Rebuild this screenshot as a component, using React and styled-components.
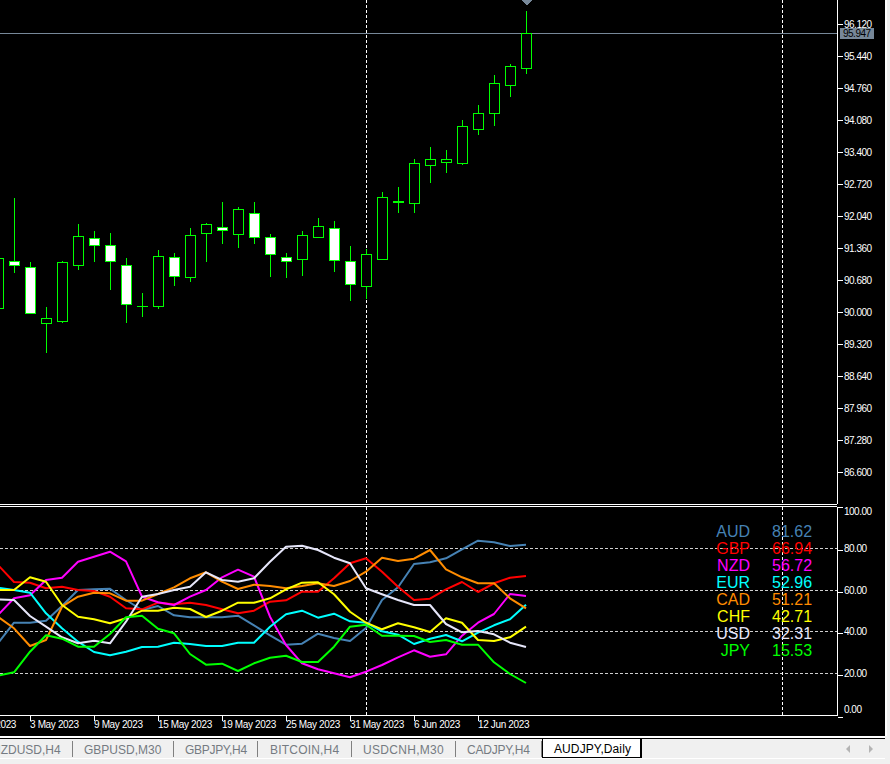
import React from "react";
import styled, { createGlobalStyle } from "styled-components";

const Global = createGlobalStyle`
  html, body { margin: 0; padding: 0; background: #f0f0f0; }
  #root { width: 890px; height: 764px; overflow: hidden; }
`;

const FONT = `"Liberation Sans", Arial, sans-serif`;
const SLATE = "#778899";

const Page = styled.div`
  width: 890px;
  height: 764px;
  overflow: hidden;
  display: flex;
  flex-direction: column;
  background: #f0f0f0;
  font-family: ${FONT};
`;
const Terminal = styled.div`
  width: 885px;
  height: 736px;
  flex: none;
  background: #000;
  border-right: 2px solid #fff;
  display: flex;
  flex-direction: column;
`;
const PriceRow = styled.section`
  display: flex;
  height: 504px;
  flex: none;
`;
const Plot = styled.div`
  position: relative;
  width: 837px;
  flex: none;
  overflow: hidden;
  svg { display: block; }
`;
const PriceAxis = styled.div`
  position: relative;
  flex: 1;
  border-left: 1px solid #fff;
  padding-top: 8px;
  display: flex;
  flex-direction: column;
`;
const PriceTick = styled.div`
  position: relative;
  height: 32px;
  flex: none;
  padding-left: 6px;
  line-height: 34px;
  color: #fff;
  font-size: 10px;
  letter-spacing: -0.5px;
  &::before {
    content: "";
    position: absolute;
    left: 0;
    top: 16px;
    width: 5px;
    height: 1px;
    background: #fff;
  }
`;
const BidTag = styled.div`
  position: absolute;
  left: 2px;
  top: 28px;
  width: 34px;
  height: 11px;
  line-height: 11px;
  background: ${SLATE};
  color: #000;
  font-size: 10px;
  letter-spacing: -0.5px;
  padding-left: 3px;
  box-sizing: border-box;
`;
const Separator = styled.div`
  width: 837px;
  height: 3px;
  flex: none;
  box-sizing: border-box;
  border-top: 1px solid #fff;
  border-bottom: 1px solid #fff;
`;
const IndicatorRow = styled.section`
  display: flex;
  height: 209px;
  flex: none;
`;
const IndicatorPlot = styled(Plot)`
  border-bottom: 1px solid #fff;
`;
const IndicatorAxis = styled.div`
  flex: 1;
  border-left: 1px solid #fff;
  position: relative;
  display: flex;
  flex-direction: column;
`;
const Level = styled.div`
  position: relative;
  height: 12px;
  line-height: 10px;
  flex: none;
  margin-top: ${(p) => p.$gap}px;
  padding-left: 6px;
  color: #fff;
  font-size: 10px;
  letter-spacing: -0.5px;
  &::before {
    content: "";
    position: absolute;
    left: 0;
    top: ${(p) => p.$tick}px;
    width: 5px;
    height: 1px;
    background: #fff;
  }
`;
const Legend = styled.div`
  position: absolute;
  right: 25px;
  top: 16px;
  display: grid;
  grid-template-columns: auto 40px;
  column-gap: 22px;
  font-size: 16px;
  line-height: 17px;
  text-align: right;
`;
const LegendCell = styled.span`
  color: ${(p) => p.$color};
`;
const TimeAxis = styled.div`
  height: 20px;
  flex: none;
  width: 837px;
  overflow: hidden;
  display: flex;
`;
const TimeTrack = styled.div`
  display: grid;
  grid-auto-flow: column;
  grid-auto-columns: 64px;
  margin-left: -34px;
  flex: none;
`;
const TimeLabel = styled.div`
  position: relative;
  color: #fff;
  font-size: 10px;
  line-height: 17px;
  white-space: nowrap;
  letter-spacing: -0.35px;
  &::before {
    content: "";
    position: absolute;
    left: 0;
    top: 0;
    width: 1px;
    height: 5px;
    background: #fff;
  }
`;
const TabBar = styled.nav`
  width: 885px;
  height: 24px;
  flex: none;
  box-sizing: border-box;
  border-top: 2px solid #fff;
  display: flex;
  flex-direction: column;
`;
const TabStrip = styled.div`
  height: 21px;
  flex: none;
  box-sizing: border-box;
  border-top: 1px solid #000;
  border-bottom: 1px solid #fff;
  display: flex;
  align-items: flex-start;
  overflow: hidden;
`;
const Tab = styled.div`
  position: relative;
  flex: none;
  box-sizing: border-box;
  width: ${(p) => p.$width}px;
  margin-left: ${(p) => p.$offset || 0}px;
  height: 19px;
  line-height: 23px;
  padding-left: ${(p) => p.$pad || 11}px;
  font-size: 12px;
  letter-spacing: ${(p) => p.$spacing || 0}px;
  color: #757b82;
  white-space: nowrap;
  overflow: hidden;
  &::after {
    content: "";
    position: absolute;
    right: 0;
    top: 2px;
    bottom: 1px;
    width: 1px;
    background: #808080;
  }
`;
const ActiveTab = styled.div`
  flex: none;
  box-sizing: border-box;
  width: 100px;
  height: 20px;
  line-height: 20px;
  font-size: 12px;
  letter-spacing: 0.1px;
  color: #000;
  background: #fff;
  padding-left: 11px;
  border-left: 1px solid #000;
  border-right: 2px solid #000;
  border-bottom: 2px solid #000;
`;
const ScrollArrows = styled.div`
  margin-left: auto;
  height: 19px;
  display: flex;
  align-items: center;
  gap: 19px;
  padding-right: 12px;
`;
const ArrowLeft = styled.span`
  width: 0;
  height: 0;
  border-style: solid;
  border-width: 4px 4px 4px 0;
  border-color: transparent #b4b4b4 transparent transparent;
`;
const ArrowRight = styled.span`
  width: 0;
  height: 0;
  border-style: solid;
  border-width: 4px 0 4px 4px;
  border-color: transparent transparent transparent #b4b4b4;
`;

/* x, wickTop, wickBottom, bodyTop, bodyBottom, filled */
const candles = [
  [-2, 250, 312, 258, 308, 0],
  [14, 198, 273, 261, 265, 1],
  [30, 262, 314, 267, 313, 1],
  [46, 307, 353, 318, 323, 0],
  [62, 261, 323, 262, 321, 0],
  [78, 224, 270, 236, 265, 0],
  [94, 231, 262, 238, 245, 1],
  [110, 233, 290, 245, 261, 1],
  [126, 258, 323, 265, 304, 1],
  [142, 293, 317, 306, 306, 0],
  [158, 250, 309, 256, 306, 0],
  [174, 253, 286, 257, 276, 1],
  [190, 228, 282, 235, 277, 0],
  [206, 223, 262, 224, 233, 0],
  [222, 202, 244, 227, 230, 1],
  [238, 207, 248, 209, 234, 0],
  [254, 202, 244, 213, 237, 1],
  [270, 234, 277, 237, 254, 1],
  [286, 253, 278, 257, 261, 1],
  [302, 231, 276, 235, 259, 0],
  [318, 218, 238, 226, 237, 0],
  [334, 221, 272, 228, 260, 1],
  [350, 246, 301, 261, 284, 1],
  [366, 249, 299, 254, 286, 0],
  [382, 192, 260, 197, 259, 0],
  [398, 187, 213, 201, 201, 2],
  [414, 159, 213, 163, 203, 0],
  [430, 147, 183, 159, 165, 0],
  [446, 150, 173, 159, 162, 0],
  [462, 120, 165, 126, 163, 0],
  [478, 105, 135, 113, 129, 0],
  [494, 75, 126, 83, 113, 0],
  [510, 64, 97, 66, 85, 0],
  [526, 11, 74, 33, 68, 0],
];

const prices = [
  "96.120", "95.440", "94.760", "94.080", "93.400", "92.720", "92.040", "91.360",
  "90.680", "90.000", "89.320", "88.640", "87.960", "87.280", "86.600",
];

const series = [
  { name: "AUD", value: "81.62", color: "#4682B4", v: [430, 368, 368, 362, 318, 270, 268, 266, 300, 330, 318, 346, 352, 352, 352, 347, 376, 406, 434, 431, 401, 414, 423, 384, 300, 262, 192, 187, 175, 148, 122, 127, 138, 134] },
  { name: "GBP", value: "66.94", color: "#FF0000", v: [195, 246, 248, 265, 260, 270, 273, 290, 325, 328, 308, 313, 308, 315, 328, 340, 332, 305, 301, 275, 275, 235, 190, 175, 215, 260, 300, 296, 268, 246, 276, 250, 233, 228] },
  { name: "NZD", value: "56.72", color: "#FF00FF", v: [345, 295, 286, 240, 233, 185, 170, 155, 184, 290, 307, 315, 290, 270, 232, 209, 230, 350, 435, 490, 508, 520, 532, 515, 495, 472, 451, 470, 463, 407, 368, 342, 282, 288] },
  { name: "EUR", value: "52.96", color: "#00FFFF", v: [263, 270, 278, 340, 385, 425, 456, 466, 455, 441, 440, 428, 432, 438, 438, 428, 428, 380, 343, 332, 353, 341, 364, 368, 394, 404, 432, 416, 405, 424, 398, 376, 358, 314] },
  { name: "CAD", value: "51.21", color: "#FF8C00", v: [350, 385, 438, 420, 320, 290, 278, 280, 302, 302, 282, 262, 235, 217, 245, 267, 254, 258, 265, 258, 250, 258, 243, 215, 173, 183, 176, 150, 208, 232, 250, 250, 295, 325] },
  { name: "CHF", value: "42.71", color: "#FFFF00", v: [270, 270, 232, 245, 315, 350, 358, 370, 355, 332, 332, 323, 327, 351, 332, 308, 308, 295, 268, 248, 247, 283, 335, 368, 388, 370, 382, 396, 355, 368, 420, 423, 412, 380] },
  { name: "USD", value: "32.31", color: "#E6E6FA", v: [298, 300, 348, 380, 412, 430, 422, 430, 365, 290, 282, 270, 260, 217, 240, 245, 235, 185, 140, 137, 150, 173, 190, 265, 283, 300, 315, 315, 372, 397, 393, 403, 428, 441] },
  { name: "JPY", value: "15.53", color: "#00FF00", v: [527, 517, 455, 406, 416, 440, 440, 402, 352, 347, 386, 400, 462, 494, 491, 513, 490, 473, 467, 486, 486, 440, 380, 374, 407, 407, 408, 426, 420, 434, 434, 487, 522, 549] },
];

const levels = [
  { label: "100.00", gap: 0, tick: 0 },
  { label: "80.00", gap: 25, tick: 6 },
  { label: "60.00", gap: 30, tick: 6 },
  { label: "40.00", gap: 29, tick: 6 },
  { label: "20.00", gap: 30, tick: 6 },
  { label: "0.00", gap: 24, tick: 12 },
];

const dates = [
  "27 Apr 2023", "3 May 2023", "9 May 2023", "15 May 2023", "19 May 2023",
  "25 May 2023", "31 May 2023", "6 Jun 2023", "12 Jun 2023",
];

const tabs = [
  { label: "NZDUSD,H4", width: 92, offset: -19 },
  { label: "GBPUSD,M30", width: 101 },
  { label: "GBPJPY,H4", width: 84, spacing: -0.3 },
  { label: "BITCOIN,H4", width: 94, pad: 12, spacing: 0.2 },
  { label: "USDCNH,M30", width: 104, spacing: 0.3 },
  { label: "CADJPY,H4", width: 86, spacing: -0.2 },
];

const PriceChart = () => (
  <svg width="837" height="504" shapeRendering="crispEdges">
    <line x1="366.5" x2="366.5" y1="0" y2="504" stroke="#fff" strokeDasharray="3 2" />
    <line x1="782.5" x2="782.5" y1="0" y2="504" stroke="#fff" strokeDasharray="3 2" />
    <line x1="0" x2="837" y1="33.5" y2="33.5" stroke={SLATE} />
    <polygon points="521,0 532,0 526.5,5.5" fill={SLATE} />
    {candles.map(([x, wt, wb, bt, bb, kind]) => (
      <g key={x}>
        <line x1={x + 0.5} x2={x + 0.5} y1={wt} y2={wb} stroke="#00ff00" />
        {bt === bb ? (
          <line x1={x - 5} x2={x + 6} y1={bt + 0.5} y2={bt + 0.5} stroke="#00ff00" strokeWidth={kind === 2 ? 2 : 1} />
        ) : (
          <rect x={x - 4.5} y={bt + 0.5} width="10" height={bb - bt} fill={kind ? "#fff" : "#000"} stroke="#00ff00" />
        )}
      </g>
    ))}
  </svg>
);

const IndicatorChart = () => (
  <svg width="837" height="208">
    <g shapeRendering="crispEdges">
      {[41.5, 83.5, 124.5, 166.5].map((y) => (
        <line key={y} x1="0" x2="837" y1={y} y2={y} stroke="#cfcfcf" strokeDasharray="3 2" />
      ))}
      <line x1="366.5" x2="366.5" y1="0" y2="208" stroke="#fff" strokeDasharray="3 2" />
      <line x1="782.5" x2="782.5" y1="0" y2="208" stroke="#fff" strokeDasharray="3 2" />
    </g>
    {series.map((s) => (
      <polyline
        key={s.name}
        fill="none"
        stroke={s.color}
        strokeWidth="2"
        strokeLinejoin="round"
        points={s.v.map((v, i) => `${-2 + 16 * i},${(v / 3 - 7).toFixed(1)}`).join(" ")}
      />
    ))}
  </svg>
);

export default function App() {
  return (
    <Page>
      <Global />
      <Terminal>
        <PriceRow>
          <Plot>
            <PriceChart />
          </Plot>
          <PriceAxis>
            {prices.map((p) => (
              <PriceTick key={p}>{p}</PriceTick>
            ))}
            <BidTag>95.947</BidTag>
          </PriceAxis>
        </PriceRow>
        <Separator />
        <IndicatorRow>
          <IndicatorPlot>
            <IndicatorChart />
            <Legend>
              {series.map((s) => (
                <React.Fragment key={s.name}>
                  <LegendCell $color={s.color}>{s.name}</LegendCell>
                  <LegendCell $color={s.color}>{s.value}</LegendCell>
                </React.Fragment>
              ))}
            </Legend>
          </IndicatorPlot>
          <IndicatorAxis>
            {levels.map((l) => (
              <Level key={l.label} $gap={l.gap} $tick={l.tick}>
                {l.label}
              </Level>
            ))}
          </IndicatorAxis>
        </IndicatorRow>
        <TimeAxis>
          <TimeTrack>
            {dates.map((d) => (
              <TimeLabel key={d}>{d}</TimeLabel>
            ))}
          </TimeTrack>
        </TimeAxis>
      </Terminal>
      <TabBar>
        <TabStrip>
          {tabs.map((t) => (
            <Tab key={t.label} $width={t.width} $offset={t.offset} $pad={t.pad} $spacing={t.spacing}>
              {t.label}
            </Tab>
          ))}
          <ActiveTab>AUDJPY,Daily</ActiveTab>
          <ScrollArrows>
            <ArrowLeft />
            <ArrowRight />
          </ScrollArrows>
        </TabStrip>
      </TabBar>
    </Page>
  );
}
